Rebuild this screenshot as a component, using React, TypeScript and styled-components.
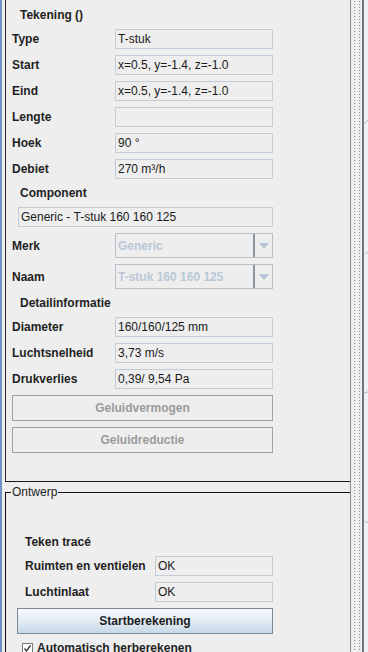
import styled, { createGlobalStyle } from 'styled-components'

const GlobalStyle = createGlobalStyle`
  html, body {
    margin: 0;
    padding: 0;
    background: #eeeeee;
  }
  body {
    font-family: "Liberation Sans", Arial, sans-serif;
    font-size: 12px;
    color: #1f1f1f;
  }
`

/** whole window */
const Frame = styled.div`
  display: flex;
  width: 368px;
  height: 652px;
  overflow: hidden;
  background: #eeeeee;
`

/** blue edge of the outer window */
const WindowEdge = styled.div`
  width: 2px;
  flex-shrink: 0;
  margin-right: 3px;
  background: #6f8fc8;
`

/** property side panel */
const SidePanel = styled.div`
  width: 346px;
  flex-shrink: 0;
  box-sizing: border-box;
  border-right: 1px solid #8c8c8c;
  display: flex;
  flex-direction: column;
  overflow: hidden;
`

const UpperPanel = styled.div`
  height: 482px;
  flex-shrink: 0;
  box-sizing: border-box;
  border-left: 1px solid #2a2a2a;
  border-bottom: 1px solid #1a1a1a;
  padding-left: 6px;
`

const SectionTitle = styled.div<{ $h: number; $gap?: number }>`
  height: ${p => p.$h}px;
  margin-bottom: ${p => p.$gap ?? 0}px;
  display: flex;
  align-items: center;
  padding-left: 8px;
  font-weight: bold;
`

const FieldRow = styled.div<{ $h?: number; $gap?: number }>`
  display: flex;
  align-items: center;
  height: ${p => p.$h ?? 20}px;
  margin-bottom: ${p => p.$gap ?? 6}px;
`

const Label = styled.div<{ $w?: number; $indent?: number }>`
  width: ${p => p.$w ?? 103}px;
  flex-shrink: 0;
  box-sizing: border-box;
  padding-left: ${p => p.$indent ?? 0}px;
  font-weight: bold;
  white-space: nowrap;
`

const Field = styled.div<{ $w?: number; $indent?: number }>`
  width: ${p => p.$w ?? 158}px;
  height: 20px;
  margin-left: ${p => p.$indent ?? 0}px;
  box-sizing: border-box;
  border: 1px solid #c3ccd6;
  padding-left: 2px;
  display: flex;
  align-items: center;
  white-space: nowrap;
  overflow: hidden;
  color: #1a1a1a;
`

const Combo = styled.div`
  width: 158px;
  height: 25px;
  box-sizing: border-box;
  border: 1px solid #b5c0cb;
  display: flex;
`

const ComboText = styled.div`
  flex: 1;
  border-right: 2px solid #8d959d;
  padding-left: 2px;
  display: flex;
  align-items: center;
  font-weight: bold;
  color: #b9c8d7;
  white-space: nowrap;
  overflow: hidden;
`

const ComboArrow = styled.div`
  width: 17px;
  display: flex;
  align-items: center;
  justify-content: center;
`

const Button = styled.div<{ $w?: number; $indent?: number; $primary?: boolean }>`
  width: ${p => p.$w ?? 261}px;
  height: 26px;
  margin-left: ${p => p.$indent ?? 0}px;
  margin-bottom: 6px;
  box-sizing: border-box;
  display: flex;
  align-items: center;
  justify-content: center;
  font-weight: bold;
  border: 1px solid ${p => (p.$primary ? '#7b8896' : '#a2a2a2')};
  color: ${p => (p.$primary ? '#1c1c1c' : '#9b9b9b')};
  background: ${p =>
    p.$primary ? 'linear-gradient(#f6f9fc 0%, #e4edf5 45%, #c6d8e8 100%)' : '#eeeeee'};
`

const Ontwerp = styled.fieldset`
  margin: 3px 0 0 0;
  padding: 0 0 0 5px;
  border: 0;
  border-top: 1px solid #111;
  border-left: 1px solid #111;
  min-width: 0;
  flex: 1 0 auto;
`

const Legend = styled.legend`
  padding: 0 1px;
  font-size: 12px;
  line-height: 14px;
  color: #1f1f1f;
`

const OntwerpBody = styled.div`
  padding: 33px 0 0 6px;
`

const CheckRow = styled.div`
  display: flex;
  align-items: center;
  gap: 4px;
  margin-top: 5px;
  padding-left: 5px;
  height: 16px;
  font-weight: bold;
`

const CheckBox = styled.span`
  width: 11px;
  height: 11px;
  box-sizing: border-box;
  border: 1px solid #7a7a7a;
  background: #ffffff;
  display: flex;
  align-items: center;
  justify-content: center;
`

/** dotted split pane divider */
const Splitter = styled.div`
  width: 11px;
  flex-shrink: 0;
  background-color: #eeeeee;
  background-image: radial-gradient(circle, #8f8f8f 0.7px, transparent 0.9px);
  background-size: 5px 3px;
  background-position: 1px 0;
`

const DarkBar = styled.div`
  width: 2px;
  flex-shrink: 0;
  background: #6d7880;
`

const Canvas = styled.div`
  flex: 1;
  background: #f1f1f1;
`

function Arrow() {
  return (
    <svg width="10" height="6" viewBox="0 0 10 6">
      <path d="M0 0 L10 0 L5 6 Z" fill="#b3c5d7" />
    </svg>
  )
}

const props = [
  ['Type', 'T-stuk'],
  ['Start', 'x=0.5, y=-1.4, z=-1.0'],
  ['Eind', 'x=0.5, y=-1.4, z=-1.0'],
  ['Lengte', ''],
  ['Hoek', '90 °'],
  ['Debiet', '270 m³/h'],
]

const details = [
  ['Diameter', '160/160/125 mm'],
  ['Luchtsnelheid', '3,73 m/s'],
  ['Drukverlies', '0,39/ 9,54 Pa'],
]

export default function App() {
  return (
    <Frame>
      <GlobalStyle />
      <WindowEdge />
      <SidePanel>
        <UpperPanel>
          <SectionTitle $h={29}>Tekening ()</SectionTitle>
          {props.map(([k, v]) => (
            <FieldRow key={k}>
              <Label>{k}</Label>
              <Field>{v}</Field>
            </FieldRow>
          ))}
          <SectionTitle $h={16} $gap={6}>Component</SectionTitle>
          <FieldRow>
            <Field $w={255} $indent={6}>Generic - T-stuk 160 160 125</Field>
          </FieldRow>
          <FieldRow $h={25}>
            <Label>Merk</Label>
            <Combo>
              <ComboText>Generic</ComboText>
              <ComboArrow><Arrow /></ComboArrow>
            </Combo>
          </FieldRow>
          <FieldRow $h={25} $gap={0}>
            <Label>Naam</Label>
            <Combo>
              <ComboText>T-stuk 160 160 125</ComboText>
              <ComboArrow><Arrow /></ComboArrow>
            </Combo>
          </FieldRow>
          <SectionTitle $h={27} $gap={1}>Detailinformatie</SectionTitle>
          {details.map(([k, v]) => (
            <FieldRow key={k}>
              <Label>{k}</Label>
              <Field>{v}</Field>
            </FieldRow>
          ))}
          <Button>Geluidvermogen</Button>
          <Button>Geluidreductie</Button>
        </UpperPanel>
        <Ontwerp>
          <Legend>Ontwerp</Legend>
          <OntwerpBody>
            <FieldRow $gap={4}>
              <Label $w={138} $indent={8}>Teken tracé</Label>
            </FieldRow>
            <FieldRow>
              <Label $w={138} $indent={8}>Ruimten en ventielen</Label>
              <Field $w={118}>OK</Field>
            </FieldRow>
            <FieldRow>
              <Label $w={138} $indent={8}>Luchtinlaat</Label>
              <Field $w={118}>OK</Field>
            </FieldRow>
            <Button $w={256} $primary>Startberekening</Button>
            <CheckRow>
              <CheckBox>
                <svg width="9" height="9" viewBox="0 0 9 9">
                  <path d="M1.5 4.5 L3.5 7 L7.5 1.5" stroke="#333" strokeWidth="1.3" fill="none" />
                </svg>
              </CheckBox>
              Automatisch herberekenen
            </CheckRow>
          </OntwerpBody>
        </Ontwerp>
      </SidePanel>
      <Splitter />
      <DarkBar />
      <Canvas>
        <svg width="5" height="652" viewBox="0 0 5 652">
          <path d="M0 124 L3 121 L5 121" stroke="#b5b5b5" strokeWidth="1" fill="none" />
          <path d="M1 254 L5 251" stroke="#b5b5b5" strokeWidth="1" fill="none" />
          <path d="M0 393 L3 392 L5 392" stroke="#b5b5b5" strokeWidth="1" fill="none" />
          <path d="M1 521 L4 523" stroke="#b5b5b5" strokeWidth="1" fill="none" />
        </svg>
      </Canvas>
    </Frame>
  )
}
